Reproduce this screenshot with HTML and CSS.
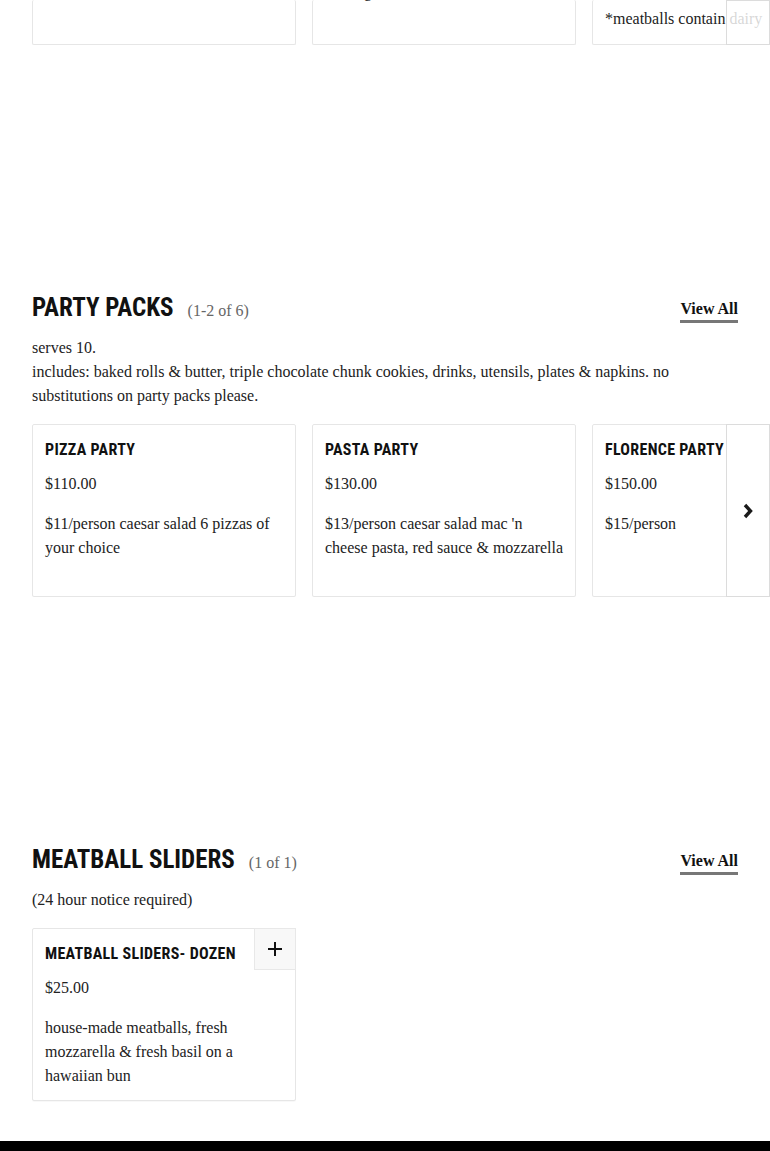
FILE: index.html
```html
<!DOCTYPE html>
<html lang="en">
<head>
<meta charset="utf-8">
<title>Catering Menu</title>
<link rel="stylesheet" href="styles.css">
</head>
<body>
<main class="menu">
  <section class="menu-section top-section">
    <div class="carousel">
      <div class="track">
        <article class="card card-clipped"></article>
        <article class="card card-clipped"><p class="clip-above">serving</p></article>
        <article class="card card-clipped"><p class="clip-last">*meatballs contain dairy</p></article>
      </div>
      <button class="next" aria-label="Next"></button>
    </div>
  </section>

  <section class="menu-section">
    <header class="section-head">
      <div class="title-wrap">
        <h2 class="section-title">Party Packs</h2>
        <span class="count">(1-2 of 6)</span>
      </div>
      <a class="view-all" href="#">View All</a>
    </header>
    <p class="section-note">serves 10.<br>includes: baked rolls &amp; butter, triple chocolate chunk cookies, drinks, utensils, plates &amp; napkins. no substitutions on party packs please.</p>
    <div class="carousel">
      <div class="track">
        <article class="card card-tall">
          <h3 class="card-title">Pizza Party</h3>
          <p class="price">$110.00</p>
          <p class="desc">$11/person caesar salad 6 pizzas of your choice</p>
        </article>
        <article class="card card-tall">
          <h3 class="card-title">Pasta Party</h3>
          <p class="price">$130.00</p>
          <p class="desc">$13/person caesar salad mac 'n cheese pasta, red sauce &amp; mozzarella</p>
        </article>
        <article class="card card-tall">
          <h3 class="card-title">Florence Party</h3>
          <p class="price">$150.00</p>
          <p class="desc">$15/person</p>
        </article>
      </div>
      <button class="next" aria-label="Next">
        <svg width="12" height="18" viewBox="0 0 12 18"><path d="M3 3 L8.5 9 L3 15" fill="none" stroke="#1a1a1a" stroke-width="3.4"/></svg>
      </button>
    </div>
  </section>

  <section class="menu-section">
    <header class="section-head">
      <div class="title-wrap">
        <h2 class="section-title">Meatball Sliders</h2>
        <span class="count">(1 of 1)</span>
      </div>
      <a class="view-all" href="#">View All</a>
    </header>
    <p class="section-note">(24 hour notice required)</p>
    <div class="grid">
      <article class="card">
        <h3 class="card-title">Meatball Sliders- Dozen</h3>
        <p class="price">$25.00</p>
        <p class="desc">house-made meatballs, fresh mozzarella &amp; fresh basil on a hawaiian bun</p>
        <button class="add" aria-label="Add">
          <svg width="16" height="16" viewBox="0 0 16 16"><path d="M8 1 V15 M1 8 H15" stroke="#111" stroke-width="2"/></svg>
        </button>
      </article>
    </div>
  </section>
</main>
<footer class="site-footer"></footer>
</body>
</html>
```

FILE: styles.css
```css
* { box-sizing: border-box; }
html, body { margin: 0; padding: 0; background: #fff; }
body {
  font-family: "Liberation Serif", "DejaVu Serif", serif;
  color: #222;
  font-size: 16px;
  line-height: 24px;
  overflow-x: hidden;
}
p { margin: 0; }
.menu { padding: 0 32px; }
.menu-section { margin-bottom: 247px; }
.menu-section:last-child { margin-bottom: 40px; }

.section-head {
  display: flex;
  justify-content: space-between;
  align-items: center;
}
.title-wrap { display: flex; align-items: baseline; gap: 14px; }
.section-title {
  margin: 0;
  font-family: "Roboto Condensed", "DejaVu Sans Condensed", sans-serif;
  font-weight: 700;
  font-size: 25px;
  line-height: 32px;
  text-transform: uppercase;
  letter-spacing: 0;
  color: #111;
}
.count { color: #666; font-size: 16px; }
.view-all {
  color: #111;
  font-weight: 700;
  text-decoration: none;
  border-bottom: 3px solid #777;
  line-height: 20px;
  padding-bottom: 1px;
  margin-top: 6px;
}
.section-note { margin-top: 12px; margin-bottom: 16px; }

.carousel { position: relative; margin-right: -32px; overflow: hidden; }
.track { display: flex; gap: 16px; }
.grid { display: grid; grid-template-columns: 264px; }
.card {
  position: relative;
  flex: 0 0 264px;
  width: 264px;
  border: 1px solid #e6e6e6;
  border-radius: 2px;
  background: #fff;
  padding: 13px 8px 12px 12px;
  box-shadow: 0 1px 1px rgba(0,0,0,0.03);
}
.card-clipped {
  height: 45px;
  border-top: none;
  padding-top: 0;
  overflow: hidden;
}
.clip-above { margin-top: -20px; }
.clip-last { padding-top: 7px; }
.card-tall { min-height: 173px; }
.card-title {
  margin: 0;
  font-family: "Roboto Condensed", "DejaVu Sans Condensed", sans-serif;
  font-weight: 700;
  font-size: 16px;
  line-height: 24px;
  letter-spacing: 0.3px;
  text-transform: uppercase;
  color: #111;
  white-space: nowrap;
}
.price { margin-top: 10px; }
.desc { margin-top: 16px; }

.next {
  position: absolute;
  top: 0;
  bottom: 0;
  right: 0;
  width: 44px;
  border: 1px solid #dcdcdc;
  background: rgba(255,255,255,0.82);
  padding: 0;
  display: flex;
  align-items: center;
  justify-content: center;
}
.add {
  position: absolute;
  top: -1px;
  right: -1px;
  width: 42px;
  height: 42px;
  background: #f8f8f8;
  border: 1px solid #e8e8e8;
  padding: 0;
  display: flex;
  align-items: center;
  justify-content: center;
}
.site-footer { height: 10px; background: #000; }
```
